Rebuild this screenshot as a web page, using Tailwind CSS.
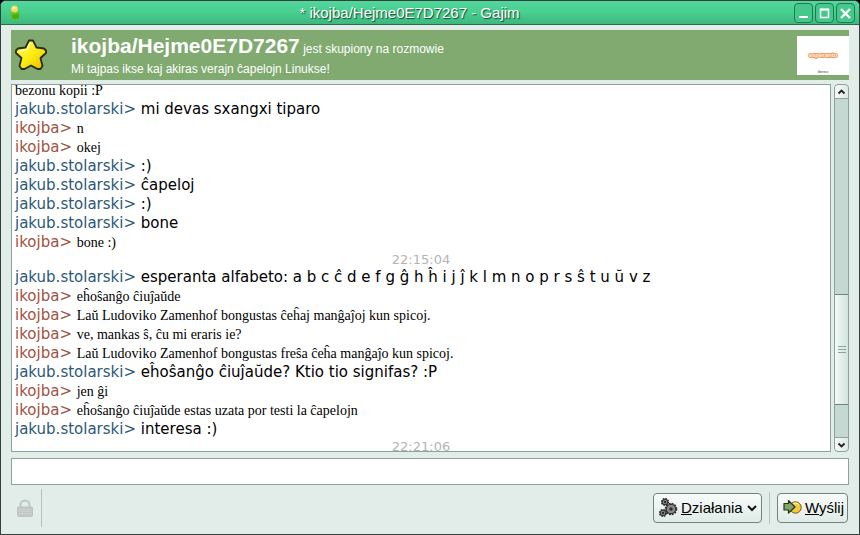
<!DOCTYPE html>
<html lang="pl">
<head>
<meta charset="utf-8">
<title>* ikojba/Hejme0E7D7267 - Gajim</title>
<script src="https://cdn.jsdelivr.net/npm/@tailwindcss/browser@4"></script>
</head>
<body class="bg-black">
<div class="flex h-screen flex-col overflow-hidden rounded-t-md border border-[#33403c] bg-[#e2ede9] font-['Liberation_Sans',sans-serif] text-black">

  <header class="flex h-6 shrink-0 items-center border-b border-[#2a6b4c] bg-linear-to-b from-[#53d79b] via-[#47cf90] to-[#3db87e] px-1">
    <svg class="ml-1 h-4 w-4" viewBox="0 0 16 16" aria-hidden="true">
      <path d="M0 8 L4 7 C5 6 8 6 9 7 L12 8 L10 11 L10 14 Q6 16 3 14 L2 10Z" fill="#62c41c"/>
      <path d="M3 10 L10 9 L10 13 Q6 15 3 13Z" fill="#4daa12"/>
      <circle cx="5.500" cy="4" r="3.500" fill="#f2d95c"/><circle cx="5" cy="3" r="1.500" fill="#fff3b0"/>
    </svg>
    <h1 class="flex-1 text-center text-[15px] leading-5 text-white [text-shadow:1px_1px_1px_#14452e]">* ikojba/Hejme0E7D7267 - Gajim</h1>
    <div class="flex gap-0.5">
      <button type="button" aria-label="Minimalizuj" class="h-5 w-[19px] rounded border border-[#1f7a50] bg-[#45c88b]">
        <svg viewBox="0 0 17 18" aria-hidden="true"><path d="M4 13H13" stroke="#fff" stroke-width="2"/></svg>
      </button>
      <button type="button" aria-label="Maksymalizuj" class="h-5 w-[19px] rounded border border-[#1f7a50] bg-[#45c88b]">
        <svg viewBox="0 0 17 18" aria-hidden="true"><path d="M4.500 5.500H12.500V13.500H4.500Z" fill="none" stroke="#fff" stroke-width="1.500"/><path d="M4 5.500H13" stroke="#fff" stroke-width="2"/></svg>
      </button>
      <button type="button" aria-label="Zamknij" class="h-5 w-[19px] rounded border border-[#1f7a50] bg-[#45c88b]">
        <svg viewBox="0 0 17 18" aria-hidden="true"><path d="M4 5L13 14M13 5L4 14" stroke="#fff" stroke-width="2.400"/></svg>
      </button>
    </div>
  </header>

  <main class="flex min-h-0 flex-1 flex-col px-2.5 pt-[5px] pb-[7px]">
    <section class="flex h-[50px] shrink-0 items-center bg-[#80aa70] pl-1 text-white">
      <svg class="h-8 w-8" viewBox="0 0 32 32" aria-hidden="true">
        <defs><linearGradient id="gold" x1="0" y1="0" x2="1" y2="1"><stop offset="0" stop-color="#fffb6a"/><stop offset=".5" stop-color="#fdee10"/><stop offset="1" stop-color="#e6b800"/></linearGradient></defs>
        <path d="M14 1.500H18L21.500 8.500L29 9.500L31 11.500V14L25.500 19L27.500 27L25.500 30H22.500L16 26.500L9.500 30H6.500L4.500 27L6.500 19L1 14V11.500L3 9.500L10.500 8.500Z" fill="url(#gold)" stroke="#2a2a16" stroke-width="1.800" stroke-linejoin="round"/>
        <path d="M15 4L12 10.500L5 12" fill="none" stroke="#fffcb8" stroke-width="1.500"/>
      </svg>
      <div class="ml-6 flex-1">
        <p class="text-xs leading-6"><strong class="text-[21px] leading-6 font-bold">ikojba/Hejme0E7D7267</strong> jest skupiony na rozmowie</p>
        <p class="text-xs leading-4">Mi tajpas ikse kaj akiras verajn ĉapelojn Linukse!</p>
      </div>
      <div class="flex h-[39px] w-[52px] flex-col items-center justify-end bg-white">
        <svg viewBox="0 0 52 39" role="img" aria-label="esperanto"><text x="26" y="21" text-anchor="middle" font-size="6" font-weight="bold" fill="#fff0e0" stroke="#f29a62" stroke-width="1.800" paint-order="stroke">esperanto</text><text x="26" y="37" text-anchor="middle" font-size="3" fill="#333">libereco</text></svg>
      </div>
    </section>

    <div class="mt-1 flex min-h-0 flex-1 gap-[3px]">
      <section aria-label="Rozmowa" class="flex flex-1 flex-col justify-end overflow-hidden border border-[#8ba39b] bg-white px-[3px] font-['DejaVu_Sans',sans-serif] text-[15px] leading-[19px]">
        <p><span class="font-['Liberation_Serif',serif] text-sm leading-[19px]">bezonu kopii :P</span></p>
        <p><span class="text-[#2c5878]">jakub.stolarski&gt;</span> mi devas sxangxi tiparo</p>
        <p><span class="text-[#a3513f]">ikojba&gt;</span> <span class="font-['Liberation_Serif',serif] text-sm leading-[19px]">n</span></p>
        <p><span class="text-[#a3513f]">ikojba&gt;</span> <span class="font-['Liberation_Serif',serif] text-sm leading-[19px]">okej</span></p>
        <p><span class="text-[#2c5878]">jakub.stolarski&gt;</span> :)</p>
        <p><span class="text-[#2c5878]">jakub.stolarski&gt;</span> ĉapeloj</p>
        <p><span class="text-[#2c5878]">jakub.stolarski&gt;</span> :)</p>
        <p><span class="text-[#2c5878]">jakub.stolarski&gt;</span> bone</p>
        <p><span class="text-[#a3513f]">ikojba&gt;</span> <span class="font-['Liberation_Serif',serif] text-sm leading-[19px]">bone :)</span></p>
        <p class="text-center text-[13px] leading-4 text-[#b4b4b4]">22:15:04</p>
        <p><span class="text-[#2c5878]">jakub.stolarski&gt;</span> esperanta alfabeto: a b c ĉ d e f g ĝ h ĥ i j ĵ k l m n o p r s ŝ t u ŭ v z</p>
        <p><span class="text-[#a3513f]">ikojba&gt;</span> <span class="font-['Liberation_Serif',serif] text-sm leading-[19px]">eĥoŝanĝo ĉiuĵaŭde</span></p>
        <p><span class="text-[#a3513f]">ikojba&gt;</span> <span class="font-['Liberation_Serif',serif] text-sm leading-[19px]">Laŭ Ludoviko Zamenhof bongustas ĉeĥaj manĝaĵoj kun spicoj.</span></p>
        <p><span class="text-[#a3513f]">ikojba&gt;</span> <span class="font-['Liberation_Serif',serif] text-sm leading-[19px]">ve, mankas ŝ, ĉu mi eraris ie?</span></p>
        <p><span class="text-[#a3513f]">ikojba&gt;</span> <span class="font-['Liberation_Serif',serif] text-sm leading-[19px]">Laŭ Ludoviko Zamenhof bongustas freŝa ĉeĥa manĝaĵo kun spicoj.</span></p>
        <p><span class="text-[#2c5878]">jakub.stolarski&gt;</span> eĥoŝanĝo ĉiuĵaŭde? Ktio tio signifas? :P</p>
        <p><span class="text-[#a3513f]">ikojba&gt;</span> <span class="font-['Liberation_Serif',serif] text-sm leading-[19px]">jen ĝi</span></p>
        <p><span class="text-[#a3513f]">ikojba&gt;</span> <span class="font-['Liberation_Serif',serif] text-sm leading-[19px]">eĥoŝanĝo ĉiuĵaŭde estas uzata por testi la ĉapelojn</span></p>
        <p><span class="text-[#2c5878]">jakub.stolarski&gt;</span> interesa :)</p>
        <p class="-mb-1 text-center text-[13px] leading-4 text-[#b4b4b4]">22:21:06</p>
      </section>

      <div class="flex w-[15px] flex-col rounded border border-[#8ba39b] bg-[#c5d8d1]">
        <button type="button" aria-label="W górę" class="h-3.5 rounded-t border-b border-[#8ba39b] bg-linear-to-r from-[#f7faf9] to-[#dde9e4]">
          <svg viewBox="0 0 13 13" aria-hidden="true"><path d="M3.500 8.500L6.500 5.500L9.500 8.500" fill="none" stroke="#222" stroke-width="1.800"/></svg>
        </button>
        <div class="flex-[196]"></div>
        <div class="flex flex-[110] flex-col items-center justify-center gap-0.5 border-y border-[#6f857d] bg-linear-to-r from-[#f4f9f7] to-[#d3e3dc]">
          <span class="h-px w-2 bg-[#8ba39b]"></span><span class="h-px w-2 bg-[#8ba39b]"></span><span class="h-px w-2 bg-[#8ba39b]"></span>
        </div>
        <div class="flex-[32]"></div>
        <button type="button" aria-label="W dół" class="h-3.5 rounded-b border-t border-[#8ba39b] bg-linear-to-r from-[#f7faf9] to-[#dde9e4]">
          <svg viewBox="0 0 13 13" aria-hidden="true"><path d="M3.500 5.500L6.500 8.500L9.500 5.500" fill="none" stroke="#222" stroke-width="1.800"/></svg>
        </button>
      </div>
    </div>

    <input type="text" aria-label="Wiadomość" class="mt-1.5 h-[27px] w-full shrink-0 border border-[#8ba39b] bg-white px-1 text-base outline-none">

    <footer class="mt-1 flex h-[38px] shrink-0 items-center pr-px">
      <button type="button" disabled aria-label="Szyfrowanie" class="flex h-full w-[31px] items-center border-r border-[#b0c4bc] pl-1.5">
        <svg class="h-[18px] w-4" viewBox="0 0 16 18" aria-hidden="true">
          <path d="M3.500 9V6a4.500 4.500 0 0 1 9 0V9" fill="none" stroke="#c0c6c3" stroke-width="2"/>
          <rect x="0.500" y="8" width="15" height="9.500" rx="1" fill="#c3c8c6" stroke="#bcc3c0"/>
          <path d="M2 10.500H14M2 12.500H14M2 14.500H14" stroke="#ccd2cf"/>
        </svg>
      </button>
      <div class="flex-1"></div>
      <button type="button" class="flex h-[30px] w-[109px] items-center rounded border border-[#71847d] bg-linear-to-b from-[#f8fbfa] to-[#dfebe6] pl-[5px] text-[15px]">
        <svg class="mr-0.5 h-5 w-5" viewBox="0 0 20 20" aria-hidden="true">
          <g fill="#8c8c8c" stroke="#2c2c2c">
            <circle cx="12" cy="11" r="5.400" stroke-width="1.800" stroke-dasharray="1.700 1.130"/><circle cx="12" cy="11" r="4.700"/>
            <circle cx="6" cy="4" r="3.300" stroke-width="1.600" stroke-dasharray="1.500 1.090"/><circle cx="6" cy="4" r="2.800"/>
            <circle cx="4" cy="15" r="3.300" stroke-width="1.600" stroke-dasharray="1.500 1.090"/><circle cx="4" cy="15" r="2.800"/>
          </g>
          <circle cx="12" cy="11" r="1.800" fill="#2c2c2c"/><circle cx="6" cy="4" r="1.200" fill="#2c2c2c"/><circle cx="4" cy="15" r="1.200" fill="#2c2c2c"/>
        </svg>
        <span><u>D</u>ziałania</span>
        <svg class="ml-1 h-2.5 w-2.5" viewBox="0 0 10 10" aria-hidden="true"><path d="M1 3L5 7L9 3" fill="none" stroke="#111" stroke-width="2"/></svg>
      </button>
      <div class="mx-[7px] h-8 w-px bg-[#b0c4bc]"></div>
      <button type="button" class="flex h-[30px] w-[71px] items-center rounded border border-[#71847d] bg-linear-to-b from-[#f8fbfa] to-[#dfebe6] pl-[5px] text-[15px]">
        <svg class="mr-0.5 h-5 w-5" viewBox="0 0 20 20" aria-hidden="true">
          <circle cx="12.500" cy="9.500" r="5.700" fill="#f4c93c" stroke="#6a5410"/>
          <path d="M9.500 6.500a4.200 4.200 0 0 1 6 0" fill="none" stroke="#fdeaa0" stroke-width="1.300"/>
          <path d="M1 5.500H5.500V2.500L12 9L5.500 15V12H1Z" fill="#7fa56a" stroke="#22351a" stroke-width="1.200" stroke-linejoin="round"/>
        </svg>
        <span><u>W</u>yślij</span>
      </button>
    </footer>
  </main>
</div>
</body>
</html>
